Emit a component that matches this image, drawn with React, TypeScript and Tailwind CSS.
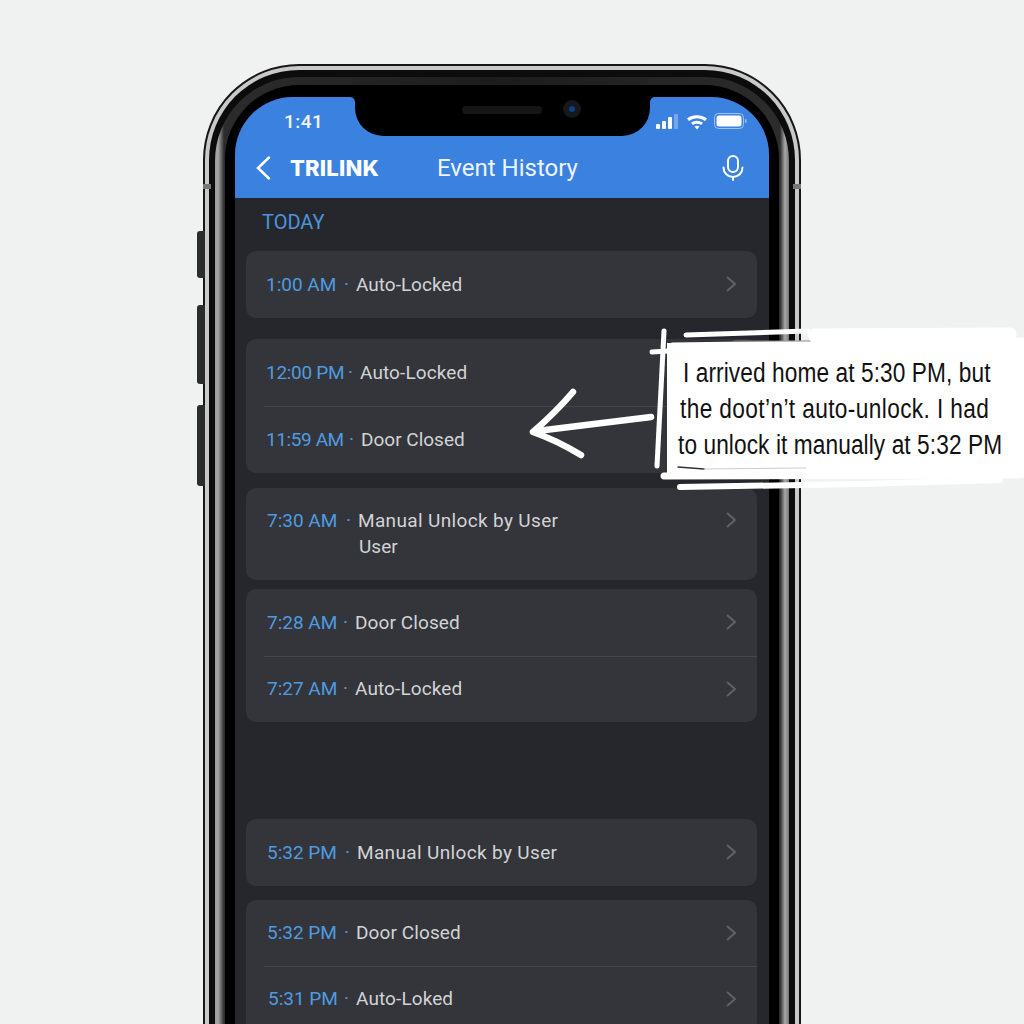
interface EventRow {
  time: string;
  label: string;
  pad: string;
  timeClass: string;
  labelClass?: string;
  second?: string;
  short?: boolean;
}

interface Group {
  className: string;
  rows: EventRow[];
}

const groups: Group[] = [
  {
    className: "mt-[17px]",
    rows: [{ time: "1:00 AM", label: "Auto-Locked", pad: "pl-[20px]", timeClass: "w-[78px]" }],
  },
  {
    className: "mt-[21px]",
    rows: [
      { time: "12:00 PM", label: "Auto-Locked", pad: "pl-[20px]", timeClass: "w-[82px] tracking-[-0.3px]", labelClass: "tracking-[0.1px]" },
      { time: "11:59 AM", label: "Door Closed", pad: "pl-[20px]", timeClass: "w-[83px] tracking-[-0.4px]" },
    ],
  },
  {
    className: "mt-[15px]",
    rows: [
      {
        time: "7:30 AM",
        label: "Manual Unlock by User",
        second: "User",
        pad: "pl-[21px]",
        timeClass: "w-[79px]",
        labelClass: "tracking-[0.35px]",
      },
    ],
  },
  {
    className: "mt-[9px]",
    rows: [
      { time: "7:28 AM", label: "Door Closed", pad: "pl-[21px]", timeClass: "w-[76px]", labelClass: "tracking-[0.1px]" },
      { time: "7:27 AM", label: "Auto-Locked", pad: "pl-[21px]", timeClass: "w-[76px]", labelClass: "tracking-[0.1px]", short: true },
    ],
  },
  {
    className: "mt-[97px]",
    rows: [
      {
        time: "5:32 PM",
        label: "Manual Unlock by User",
        pad: "pl-[21px]",
        timeClass: "w-[78px]",
        labelClass: "tracking-[0.35px]",
      },
    ],
  },
  {
    className: "mt-[14px]",
    rows: [
      { time: "5:32 PM", label: "Door Closed", pad: "pl-[21px]", timeClass: "w-[77px]", labelClass: "tracking-[0.1px]", short: true },
      { time: "5:31 PM", label: "Auto-Loked", pad: "pl-[22px]", timeClass: "w-[76px]", labelClass: "tracking-[0.1px]", short: true },
    ],
  },
];

function Row({ row, divider }: { row: EventRow; divider: boolean }) {
  const height = row.second ? "h-[92px] pt-[20px]" : row.short ? "h-[66px] flex items-center" : "h-[67px] flex items-center";
  return (
    <div className={`relative ${row.pad} ${height}`}>
      {divider && <div className="absolute top-0 left-[18px] right-0 h-px bg-[#45474c]" />}
      <div className="flex items-center text-[19px] leading-[26px]">
        <span className={`shrink-0 text-[#4f9be0] ${row.timeClass}`}>{row.time}</span>
        <span className="w-[12px] shrink-0 text-[#4f9be0]">·</span>
        <span className={`text-[#d2d3d5] ${row.labelClass ?? ""}`}>{row.label}</span>
      </div>
      {row.second && <div className="pl-[92px] text-[19px] leading-[25px] text-[#d2d3d5]">{row.second}</div>}
      <svg
        width="12"
        height="18"
        viewBox="0 0 12 18"
        fill="none"
        stroke="#5f6166"
        strokeWidth="2"
        className={`absolute right-[20px] ${row.second ? "top-[23px]" : "top-[24px]"}`}
      >
        <path d="M2 2l8 7-8 7" />
      </svg>
    </div>
  );
}

function StatusIcons() {
  return (
    <svg width="92" height="20" viewBox="0 0 92 20" className="text-white" fill="currentColor">
      <rect x="0" y="12" width="4" height="5" rx="1" />
      <rect x="6" y="9" width="4" height="8" rx="1" />
      <rect x="12" y="5" width="4" height="12" rx="1" />
      <rect x="18" y="2" width="4" height="15" rx="1" opacity="0.3" />
      <path d="M31 6.500a17 17 0 0 1 20 0l-2 2.400a13.500 13.500 0 0 0-16 0z" />
      <path d="M35 10.800a10.500 10.500 0 0 1 12 0l-2 2.300a7 7 0 0 0-8 0z" />
      <path d="M38.500 14.500a5 5 0 0 1 5 0L41 17.500z" />
      <rect x="58.500" y="1.500" width="29" height="15" rx="4" fill="none" stroke="currentColor" strokeOpacity="0.5" />
      <rect x="60.500" y="3.500" width="25" height="11" rx="2.500" />
      <rect x="89" y="7" width="1.500" height="4" rx="0.750" opacity="0.5" />
    </svg>
  );
}

function Screen() {
  return (
    <div className="relative h-[960px] overflow-hidden rounded-t-[58px] bg-[#25272c]">
      <div className="h-[101px] bg-[#3b82e0] text-white">
        <div className="flex h-[48px] items-center justify-between pt-[1px] pr-[21px] pl-[49px]">
          <span className="text-[19px] leading-[24px] font-medium tracking-[0.5px] text-[#f0f4fb]">1:41</span>
          <StatusIcons />
        </div>
        <div className="flex h-[46px] items-center">
          <svg width="16" height="26" viewBox="0 0 16 26" fill="none" stroke="currentColor" strokeWidth="2.500" strokeLinecap="round" className="ml-[20px]">
            <path d="M14 2.500L3 13l11 10.500" />
          </svg>
          <span className="ml-[19px] w-[147px] font-['Inter',sans-serif] text-[22px] font-extrabold tracking-[0.2px]">TRILINK</span>
          <span className="text-[24px] text-[#eef4fc]">Event History</span>
          <svg width="24" height="28" viewBox="0 0 24 28" fill="none" stroke="currentColor" strokeWidth="2" strokeLinecap="round" className="ml-auto mr-[24px]">
            <rect x="7" y="2" width="10" height="16" rx="5" />
            <path d="M2.500 13.500a9.500 9.500 0 0 0 19 0M12 23v3" />
          </svg>
        </div>
      </div>
      <div className="pt-[12px] pr-[12px] pl-[11px]">
        <div className="pl-[16px] text-[20px] leading-[24px] text-[#4a95de]">TODAY</div>
        {groups.map((group, index) => (
          <div key={index} className={`overflow-hidden rounded-[10px] bg-[#33353a] ${group.className}`}>
            {group.rows.map((row, i) => (
              <Row key={i} row={row} divider={i > 0} />
            ))}
          </div>
        ))}
      </div>
    </div>
  );
}

function Notch() {
  return (
    <div className="absolute top-0 left-[120px] flex h-[39px] w-[295px] rounded-b-[28px] bg-black">
      <div className="absolute top-0 -left-[5px] h-[5px] w-[5px] bg-black">
        <div className="h-full w-full rounded-tr-[5px] bg-[#3b82e0]" />
      </div>
      <div className="absolute top-0 -right-[5px] h-[5px] w-[5px] bg-black">
        <div className="h-full w-full rounded-tl-[5px] bg-[#3b82e0]" />
      </div>
      <div className="mt-[9px] ml-[107px] h-[8px] w-[80px] rounded-full bg-[#161616]" />
      <div className="mt-[3px] ml-[21px] flex h-[18px] w-[18px] items-center justify-center rounded-full bg-[#15181d]">
        <div className="h-[6px] w-[6px] rounded-full bg-[#0b3f86]" />
      </div>
    </div>
  );
}

function Phone() {
  return (
    <div className="relative ml-[203px] w-[598px] rounded-t-[96px] border-2 border-[#161616] bg-[#c9c9c9] px-[4px] pt-[4px]">
      <div className="absolute top-[165px] -left-[8px] h-[47px] w-[8px] rounded-l-[3px] bg-[#2c2c2c]" />
      <div className="absolute top-[239px] -left-[8px] h-[79px] w-[8px] rounded-l-[3px] bg-[#2c2c2c]" />
      <div className="absolute top-[339px] -left-[8px] h-[81px] w-[8px] rounded-l-[3px] bg-[#2c2c2c]" />
      <div className="absolute top-[118px] -left-[2px] h-[5px] w-[8px] bg-[#777]" />
      <div className="absolute top-[118px] -right-[2px] h-[5px] w-[8px] bg-[#777]" />
      <div className="rounded-t-[90px] bg-[#0c0c0c] px-[6px] pt-[7px]">
        <div className="rounded-t-[84px] bg-[linear-gradient(90deg,#9a9a9a_0px,#a8a8a8_3px,#2c2c2c_9px,#1c1c1c_50%,#2c2c2c_calc(100%-9px),#a8a8a8_calc(100%-4px),#777_100%)] px-[10px] pt-[8px]">
          <div className="rounded-t-[74px] bg-black px-[10px] pt-[12px]">
            <div className="relative">
              <Screen />
              <Notch />
            </div>
          </div>
        </div>
      </div>
    </div>
  );
}

// hand-drawn note and arrow lying over the phone
function Annotation() {
  return (
    <>
      <div className="absolute top-[343px] left-[667px] flex h-[135px] w-[357px] flex-col whitespace-nowrap bg-white pt-[12px] font-['Liberation_Sans',sans-serif] text-[27px] leading-[36px] text-[#111]">
        <span className="ml-[16px] w-max origin-left scale-x-[0.84] tracking-[0.1px]">I arrived home at 5:30 PM, but</span>
        <span className="ml-[13px] w-max origin-left scale-x-[0.84] tracking-[0.45px]">the doot’n’t auto-unlock. I had</span>
        <span className="ml-[11px] w-max origin-left scale-x-[0.84] tracking-[0.1px]">to unlock it manually at 5:32 PM</span>
      </div>
      <svg className="pointer-events-none absolute inset-0" width="1024" height="1024" viewBox="0 0 1024 1024" fill="none" stroke="#fff" strokeLinecap="round">
        <path d="M651 417L537 431" strokeWidth="6.500" />
        <path d="M573 392Q556 412 533 432Q556 440 581 455" strokeWidth="6.500" strokeLinejoin="round" />
        <path d="M664 331L657 466" strokeWidth="5" />
        <path d="M652 352L668 351" strokeWidth="5" />
        <path d="M686 335L808 331" strokeWidth="5" />
        <path d="M672 345L812 343" strokeWidth="5" />
        <path d="M814 335L1010 334" strokeWidth="13" />
        <path d="M812 345L1022 342" strokeWidth="9" />
        <path d="M664 476L1018 475" strokeWidth="7" />
        <path d="M680 487L860 484L1000 480" strokeWidth="6" />
        <path d="M1022 342L1021 476" strokeWidth="4" />
        <path d="M678 467L704 469" stroke="#333" strokeWidth="1.500" />
        <path d="M704 469L806 468" stroke="#bbb" strokeWidth="0.750" />
        <path d="M734 341L810 341" stroke="#888" strokeWidth="1" />
      </svg>
    </>
  );
}

export default function App() {
  return (
    <div className="relative h-[1024px] w-[1024px] overflow-hidden bg-[#f0f1f1] pt-[64px] font-['Roboto',sans-serif]">
      <Phone />
      <Annotation />
    </div>
  );
}
